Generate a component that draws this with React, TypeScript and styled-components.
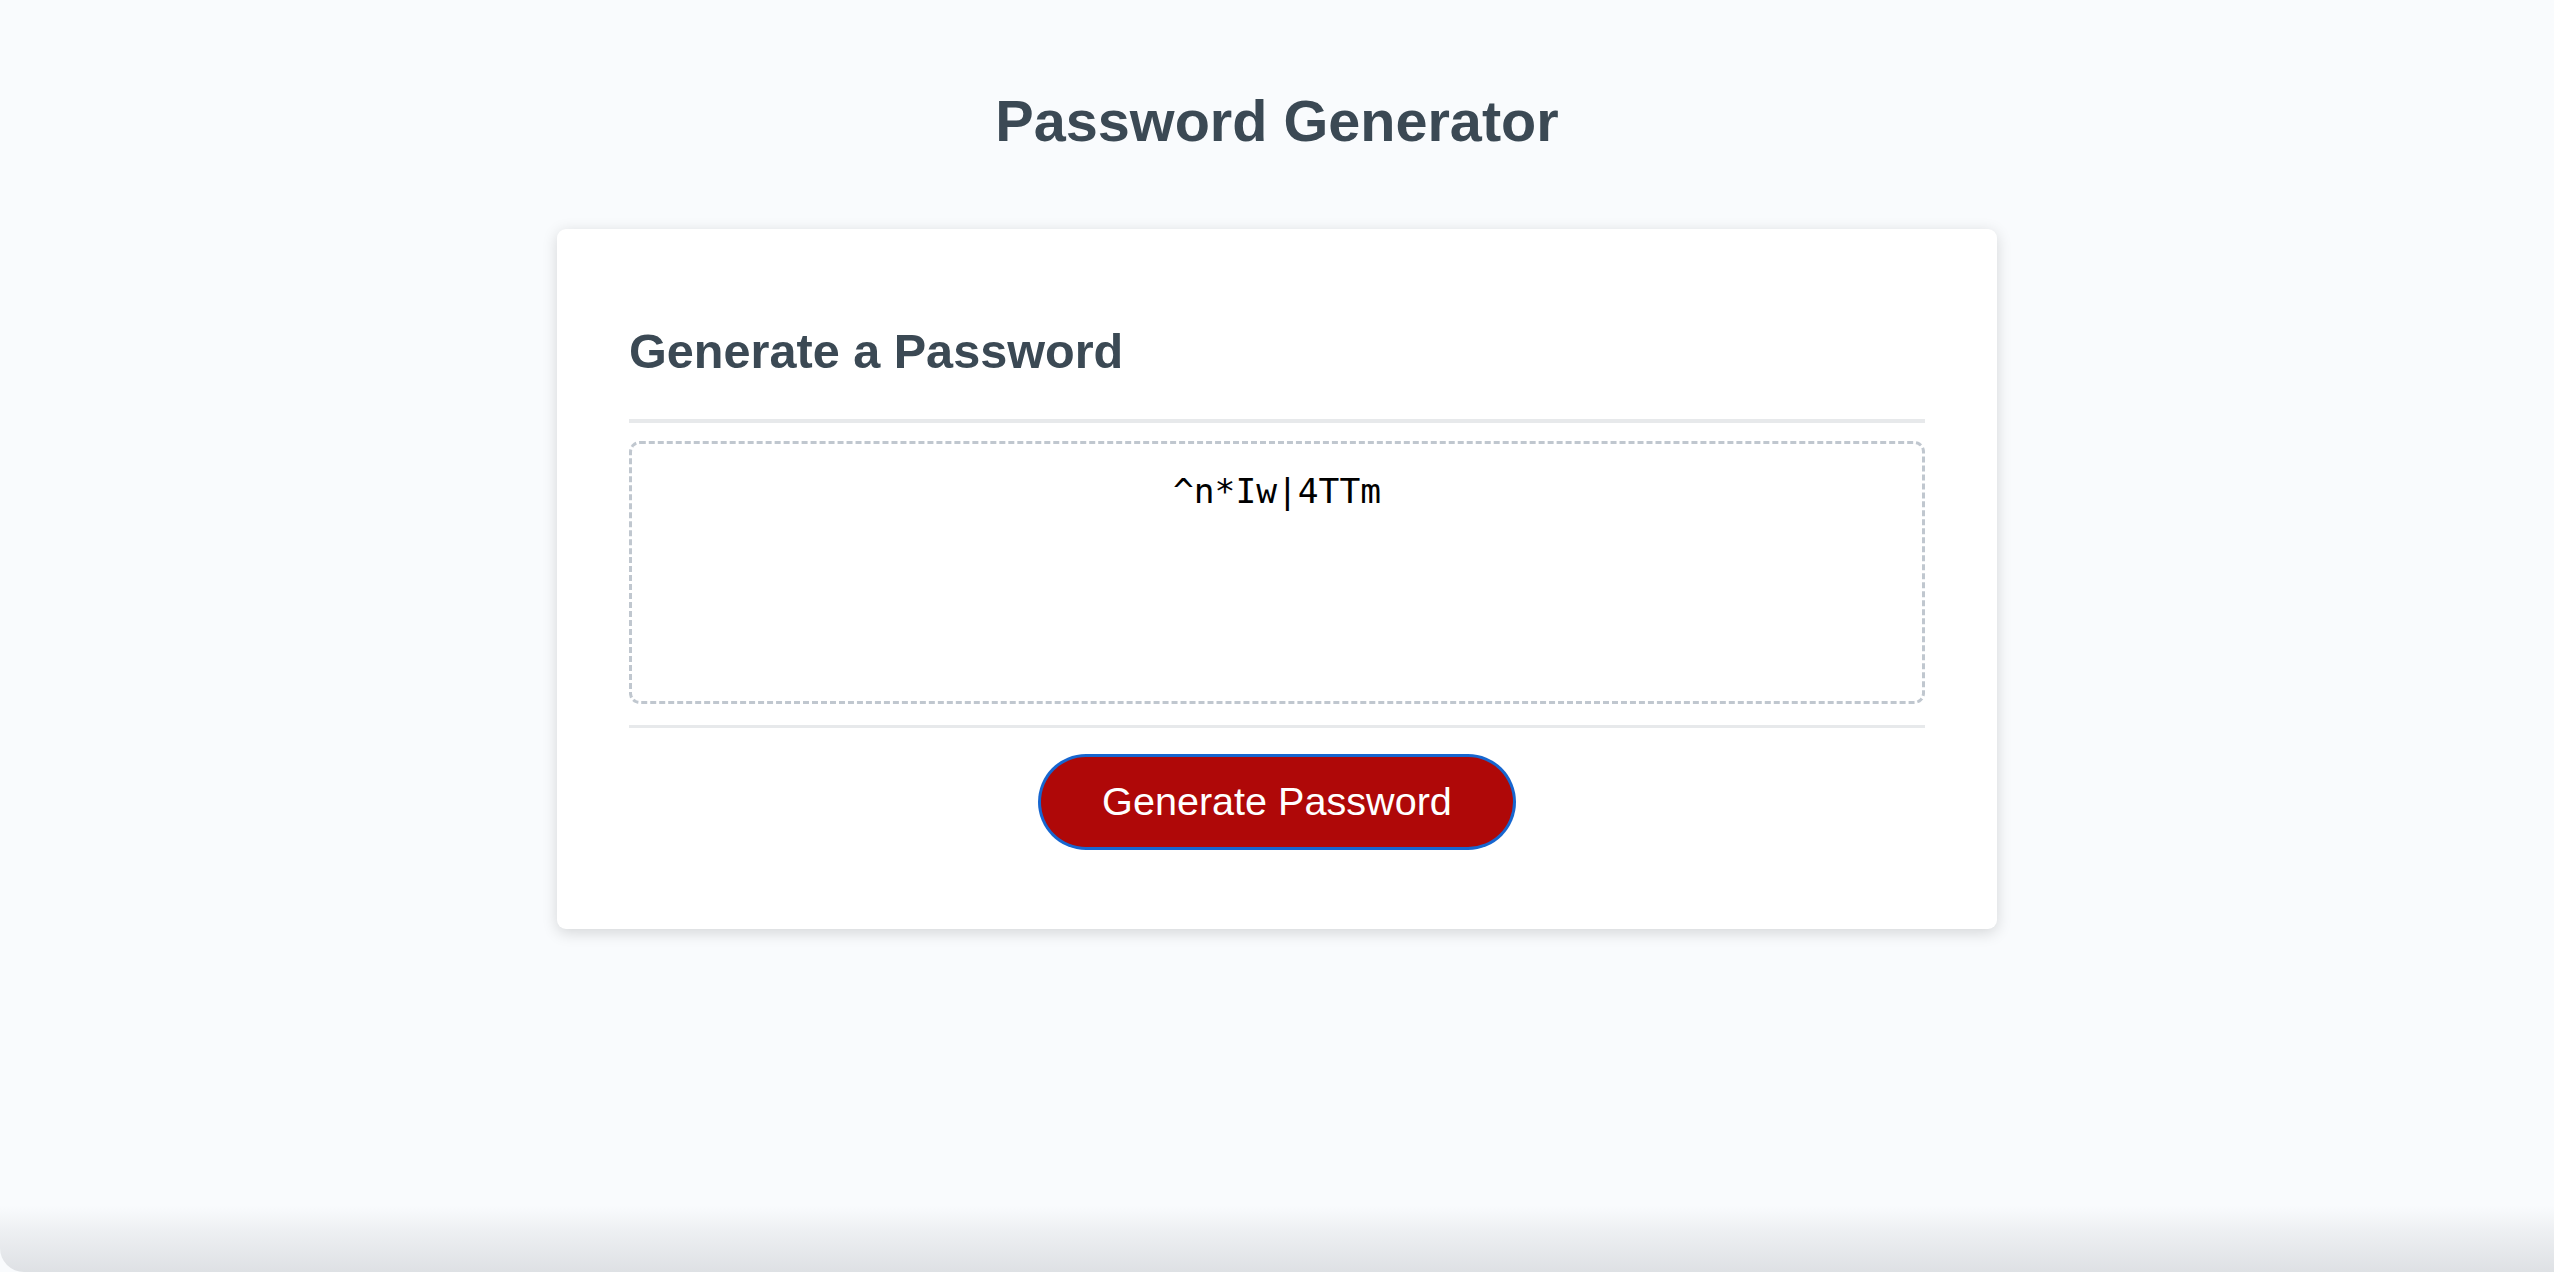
import React from "react";
import styled, { createGlobalStyle } from "styled-components";

const GlobalStyle = createGlobalStyle`
  *, *::before, *::after { box-sizing: border-box; }
  html, body { margin: 0; padding: 0; height: 100%; }
  body {
    background-color: #f9fbfd;
    font-family: "Liberation Sans", Arial, Helvetica, sans-serif;
  }
`;

const Screen = styled.div`
  position: relative;
  min-height: 100vh;
  overflow: hidden;
`;

const Wrapper = styled.div`
  padding: 53px 36px 0;
`;

const Header = styled.header`
  text-align: center;
  padding: 0 36px 36px;
  color: #3b4954;
`;

const Title = styled.h1`
  font-size: 57.6px;
  font-weight: 700;
  margin: 35px 0 38.6px;
`;

const Card = styled.section`
  background: #ffffff;
  border-radius: 9px;
  box-shadow: rgba(0, 0, 0, 0.15) 0 3.6px 14.4px 0;
  color: #3b4954;
  max-width: 1440px;
  margin: 0 auto;
  padding: 54px 72px 53px;
`;

const Rule = styled.div`
  width: 100%;
  height: 3.6px;
  background: #e7e9eb;
`;

const CardHeader = styled.div``;

const Heading = styled.h2`
  font-size: 48.6px;
  font-weight: 700;
  margin: 40.3px 0;
`;

const CardBody = styled.div``;

const PasswordBox = styled.textarea`
  appearance: none;
  display: block;
  width: 100%;
  height: 263px;
  margin: 18px 0 21px;
  padding: 27px 27px 0;
  border: 3.6px dashed #c0c7cf;
  border-radius: 10.8px;
  font-family: "DejaVu Sans Mono", "Liberation Mono", monospace;
  font-size: 34.56px;
  line-height: normal;
  color: #000000;
  background: #ffffff;
  text-align: center;
  resize: none;
  overflow: hidden;
  outline: none;
`;

const CardFooter = styled.div`
  text-align: center;
`;

const GenerateButton = styled.button`
  display: inline-block;
  margin: 28.8px 0;
  padding: 25.2px 61.2px;
  border: none;
  border-radius: 45px;
  background-color: #af0808;
  color: #ffffff;
  font-family: "Liberation Sans", Arial, Helvetica, sans-serif;
  font-size: 39.6px;
  line-height: 39.6px;
  cursor: pointer;
  box-shadow: 0 0 0 3px #1766cf;
`;

const BottomShade = styled.div`
  position: absolute;
  left: 0;
  right: 0;
  bottom: 0;
  height: 66px;
  border-bottom-left-radius: 24px;
  background: linear-gradient(
    to bottom,
    rgba(200, 203, 208, 0) 0%,
    rgba(200, 203, 208, 0.25) 40%,
    rgba(200, 203, 208, 0.55) 100%
  );
  pointer-events: none;
`;

export default function App() {
  return (
    <Screen>
      <GlobalStyle />
      <Wrapper>
        <Header>
          <Title>Password Generator</Title>
        </Header>
        <Card>
          <CardHeader>
            <Heading>Generate a Password</Heading>
            <Rule />
          </CardHeader>
          <CardBody>
            <PasswordBox readOnly value="^n*Iw|4TTm" aria-label="Generated Password" />
          </CardBody>
          <CardFooter>
            <Rule />
            <GenerateButton type="button">Generate Password</GenerateButton>
          </CardFooter>
        </Card>
      </Wrapper>
      <BottomShade />
    </Screen>
  );
}
